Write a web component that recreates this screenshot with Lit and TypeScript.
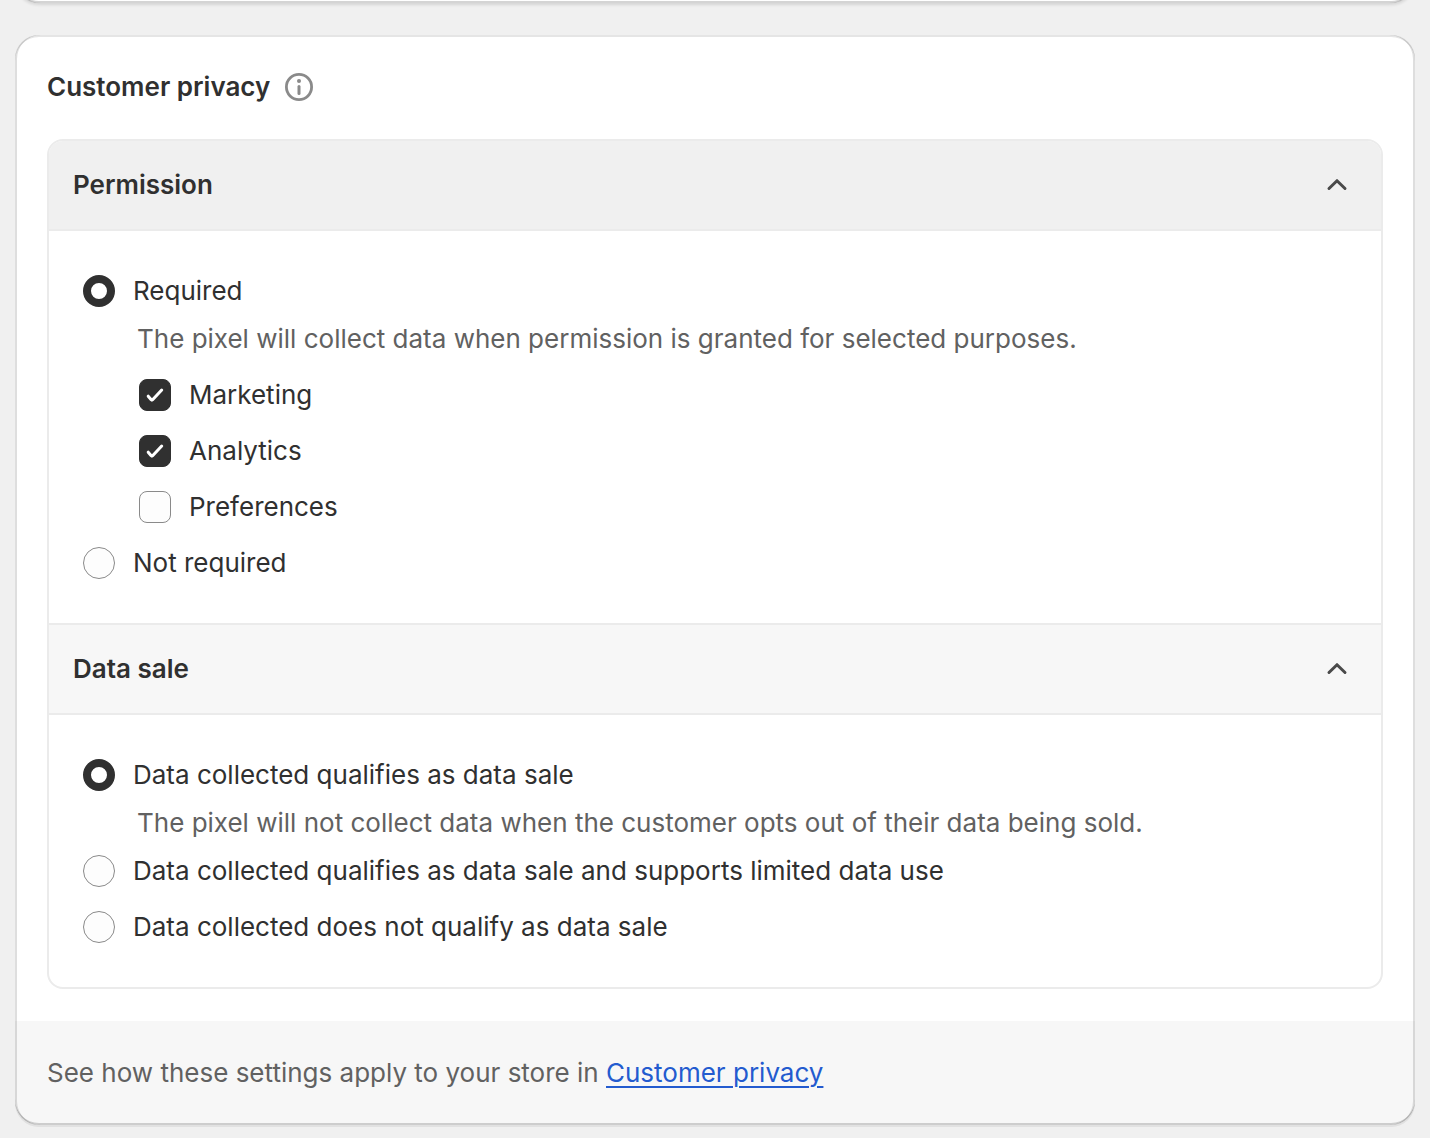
import { LitElement, css, html, nothing } from "lit";
import { customElement, state } from "lit/decorators.js";

type Permission = "required" | "not-required";
type DataSale = "sale" | "limited" | "none";

@customElement("app-root")
export class AppRoot extends LitElement {
  @state() private permissionOpen = true;
  @state() private dataSaleOpen = true;
  @state() private permission: Permission = "required";
  @state() private dataSale: DataSale = "sale";
  @state() private purposes = [
    { name: "Marketing", checked: true },
    { name: "Analytics", checked: true },
    { name: "Preferences", checked: false },
  ];

  static styles = css`
    :host {
      display: block;
      box-sizing: border-box;
      min-height: 100vh;
      overflow: hidden;
      padding: 0 15px 13px;
      background: #f0f0f0;
      color: #303030;
      font: 400 26px/40px Inter, sans-serif;
    }

    *,
    *::before,
    *::after {
      box-sizing: border-box;
    }

    .card {
      position: relative;
      border-radius: 24px;
      background: #fff;
      box-shadow: 0 2px 0 rgba(26, 26, 26, 0.07);
    }

    /* Bevelled edge drawn over the card's content */
    .card::after {
      content: "";
      position: absolute;
      inset: 0;
      border-radius: inherit;
      pointer-events: none;
      box-shadow:
        inset 2px 0 0 rgba(0, 0, 0, 0.13),
        inset -2px 0 0 rgba(0, 0, 0, 0.13),
        inset 0 -2px 0 rgba(0, 0, 0, 0.17),
        inset 0 2px 0 rgba(204, 204, 204, 0.5);
    }

    .previous {
      height: 48px;
      margin-top: -45px;
      margin-bottom: 32px;
      box-shadow: 0 2px 3px rgba(26, 26, 26, 0.12);
    }

    .body {
      display: flex;
      flex-direction: column;
      gap: 32px;
      padding: 32px;
    }

    .heading {
      display: flex;
      align-items: center;
      gap: 15px;
    }

    h2,
    h3 {
      margin: 0;
      font-size: 26px;
      line-height: 40px;
      font-weight: 600;
    }

    .info {
      width: 28px;
      height: 28px;
      padding: 0;
      border: 0;
      background: none;
      color: #8a8a8a;
      cursor: pointer;
    }

    .info svg {
      display: block;
    }

    .panel {
      overflow: hidden;
      border: 2px solid #ebebeb;
      border-radius: 16px;
    }

    h3 + .options {
      border-top: 2px solid #ebebeb;
    }

    .section + .section {
      border-top: 2px solid #ebebeb;
    }

    .toggle {
      display: flex;
      align-items: center;
      justify-content: space-between;
      width: 100%;
      padding: 24px;
      border: 0;
      background: #f7f7f7;
      color: inherit;
      font: inherit;
      text-align: left;
      cursor: pointer;
    }

    .toggle.active {
      background: #f0f0f0;
    }

    .toggle svg {
      display: block;
      flex: none;
    }

    .options {
      display: flex;
      flex-direction: column;
      align-items: flex-start;
      padding: 40px 34px;
    }

    .choice {
      display: flex;
      align-items: center;
      gap: 18px;
      cursor: pointer;
    }

    .choice + .choice,
    .purposes + .choice {
      margin-top: 16px;
    }

    .help {
      margin: 8px 0 0;
      padding-left: 54px;
      color: #616161;
    }

    .help + .choice {
      margin-top: 8px;
    }

    .purposes {
      margin-top: 16px;
      padding-left: 56px;
    }

    .box {
      display: grid;
      flex: none;
    }

    .box > * {
      grid-area: 1 / 1;
    }

    .tick {
      z-index: 1;
      pointer-events: none;
    }

    input {
      appearance: none;
      flex: none;
      width: 32px;
      height: 32px;
      margin: 0;
      border: 1px solid #8a8a8a;
      background: #fdfdfd;
      cursor: pointer;
    }

    input[type="radio"] {
      border-radius: 50%;
    }

    input[type="radio"]:checked {
      border: 8px solid #303030;
      background: #fff;
    }

    input[type="checkbox"] {
      border-radius: 8px;
    }

    input[type="checkbox"]:checked {
      border-color: #303030;
      background: #303030;
    }

    .footer {
      padding: 32px;
      border-radius: 0 0 24px 24px;
      background: #f7f7f7;
      color: #616161;
    }

    .footer p {
      margin: 0;
    }

    a {
      color: #235bcf;
      text-decoration-thickness: 2px;
      text-underline-offset: 4px;
    }
  `;

  private header(title: string, id: string, open: boolean, active: boolean, toggle: () => void) {
    return html`
      <h3>
        <button
          class="toggle ${active ? "active" : ""}"
          type="button"
          aria-expanded=${open ? "true" : "false"}
          aria-controls=${id}
          @click=${toggle}
        >
          ${title}
          <svg
            width="40"
            height="40"
            viewBox="0 0 40 40"
            fill="none"
            stroke="#4a4a4a"
            stroke-width="3"
            stroke-linecap="round"
            stroke-linejoin="round"
            aria-hidden="true"
          >
            <path d=${open ? "M12 23.5 20 15.7l8 7.8" : "M12 16.5l8 7.8 8-7.8"} />
          </svg>
        </button>
      </h3>
    `;
  }

  private radio(group: string, label: string, checked: boolean, select: () => void) {
    return html`
      <label class="choice">
        <input type="radio" name=${group} .checked=${checked} @change=${select} />
        <span>${label}</span>
      </label>
    `;
  }

  private togglePurpose(index: number) {
    this.purposes = this.purposes.map((p, i) => (i === index ? { ...p, checked: !p.checked } : p));
  }

  private permissionOptions() {
    return html`
      <div class="options" id="permission" role="radiogroup" aria-label="Permission">
        ${this.radio("permission", "Required", this.permission === "required", () => {
          this.permission = "required";
        })}
        <p class="help">The pixel will collect data when permission is granted for selected purposes.</p>
        <div class="purposes">
          ${this.purposes.map(
            (purpose, index) => html`
              <label class="choice">
                <span class="box">
                  <input
                    type="checkbox"
                    .checked=${purpose.checked}
                    @change=${() => this.togglePurpose(index)}
                  />
                  ${purpose.checked
                    ? html`<svg
                        class="tick"
                        width="32"
                        height="32"
                        viewBox="0 0 32 32"
                        fill="none"
                        stroke="#fff"
                        stroke-width="3"
                        stroke-linecap="round"
                        stroke-linejoin="round"
                        aria-hidden="true"
                      >
                        <path d="M9.2 17.2 12.2 20.8Q12.9 21.5 13.6 20.8L22.7 11" />
                      </svg>`
                    : nothing}
                </span>
                <span>${purpose.name}</span>
              </label>
            `
          )}
        </div>
        ${this.radio("permission", "Not required", this.permission === "not-required", () => {
          this.permission = "not-required";
        })}
      </div>
    `;
  }

  private dataSaleOptions() {
    return html`
      <div class="options" id="data-sale" role="radiogroup" aria-label="Data sale">
        ${this.radio("data-sale", "Data collected qualifies as data sale", this.dataSale === "sale", () => {
          this.dataSale = "sale";
        })}
        <p class="help">The pixel will not collect data when the customer opts out of their data being sold.</p>
        ${this.radio(
          "data-sale",
          "Data collected qualifies as data sale and supports limited data use",
          this.dataSale === "limited",
          () => {
            this.dataSale = "limited";
          }
        )}
        ${this.radio("data-sale", "Data collected does not qualify as data sale", this.dataSale === "none", () => {
          this.dataSale = "none";
        })}
      </div>
    `;
  }

  render() {
    return html`
      <div class="card previous"></div>
      <section class="card">
        <div class="body">
          <div class="heading">
            <h2>Customer privacy</h2>
            <button class="info" type="button" aria-label="About customer privacy">
              <svg width="28" height="28" viewBox="0 0 28 28" fill="none" aria-hidden="true">
                <circle cx="14" cy="14" r="12.6" stroke="currentColor" stroke-width="2.8" />
                <circle cx="14" cy="8" r="2" fill="currentColor" />
                <path d="M14 13.5v7" stroke="currentColor" stroke-width="3" stroke-linecap="round" />
              </svg>
            </button>
          </div>
          <div class="panel">
            <div class="section">
              ${this.header("Permission", "permission", this.permissionOpen, true, () => {
                this.permissionOpen = !this.permissionOpen;
              })}
              ${this.permissionOpen ? this.permissionOptions() : nothing}
            </div>
            <div class="section">
              ${this.header("Data sale", "data-sale", this.dataSaleOpen, false, () => {
                this.dataSaleOpen = !this.dataSaleOpen;
              })}
              ${this.dataSaleOpen ? this.dataSaleOptions() : nothing}
            </div>
          </div>
        </div>
        <div class="footer">
          <p>See how these settings apply to your store in <a href="#customer-privacy">Customer privacy</a></p>
        </div>
      </section>
    `;
  }
}
